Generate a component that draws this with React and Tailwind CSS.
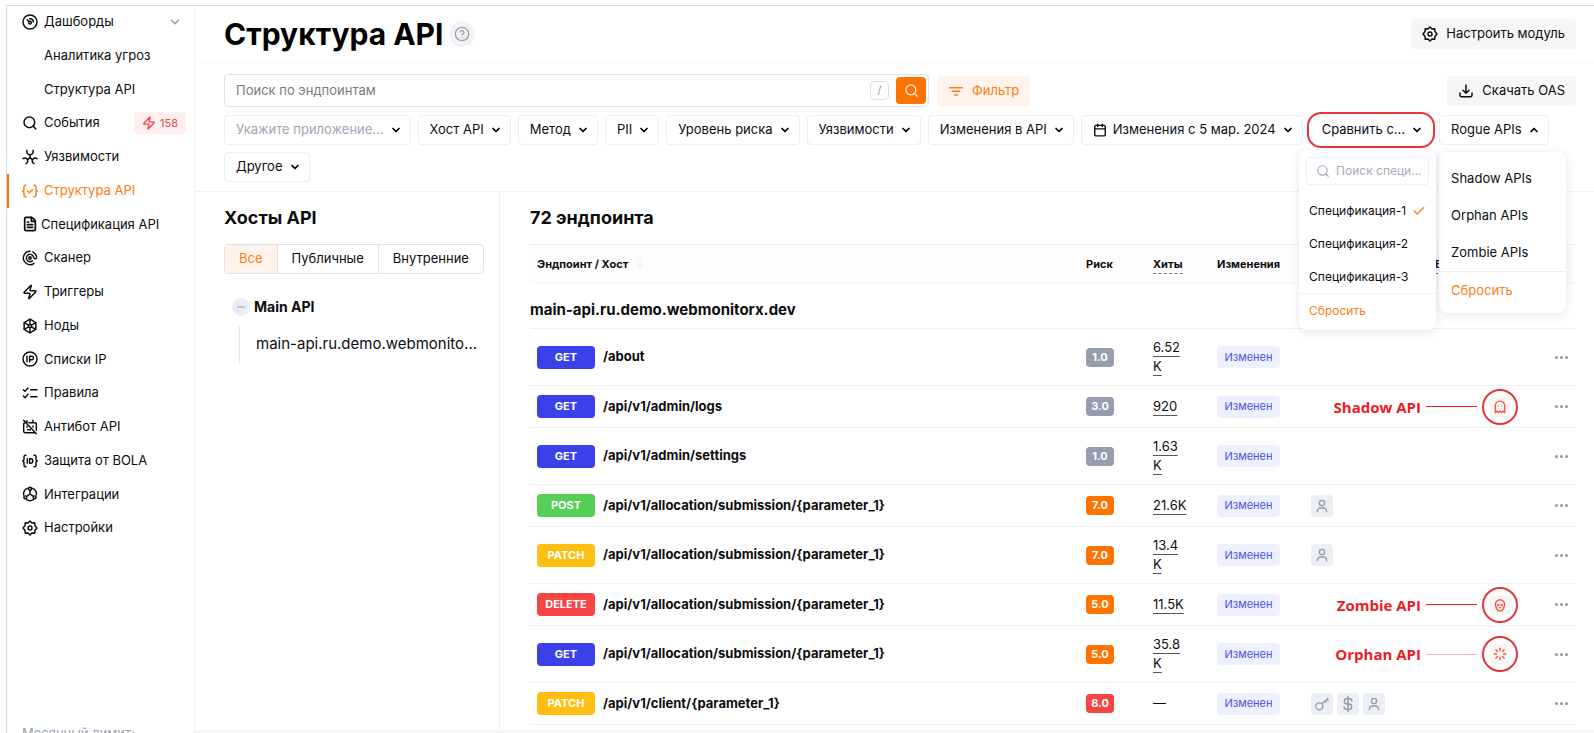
import React from "react";
import {
  Calendar,
  Check,
  ChevronDown,
  ChevronUp,
  CircleHelp,
  FileText,
  Ghost,
  Loader,
  Search,
  Skull,
  Zap,
  ArrowDown,
  Minus,
} from "lucide-react";

function Svg({ size = 16, children, className = "shrink-0" }) {
  return (
    <svg
      width={size}
      height={size}
      viewBox="0 0 24 24"
      fill="none"
      stroke="currentColor"
      strokeWidth="2.2"
      strokeLinecap="round"
      strokeLinejoin="round"
      className={className}
      aria-hidden="true"
    >
      {children}
    </svg>
  );
}

const GaugeIcon = () => (
  <Svg>
    <circle cx="12" cy="12" r="10.5" />
    <circle cx="12" cy="13" r="2" />
    <path d="M10.600 11.500 8 8.500M11.500 7c3.500 0 5.500 2.500 5.500 5" />
  </Svg>
);
const HazardIcon = () => (
  <Svg>
    <path d="M7.500 2c-1.200 3.500.8 6.500 4.500 6.500S17.700 5.500 16.500 2" />
    <path d="M12 8.500v4.500M12 13l-3.500 3M12 13l3.500 3" />
    <path d="M1.500 14.500c3-2 6.300-.5 7 2.500.5 2-.3 4-2.500 5M22.500 14.500c-3-2-6.300-.5-7 2.500-.5 2 .3 4 2.500 5" />
  </Svg>
);
const BracesIcon = () => (
  <Svg>
    <path d="M6 3.5H5.2A2.2 2.2 0 0 0 3 5.7v3.8c0 1.4-.8 2.5-2 2.5 1.200 0 2 1.100 2 2.500v3.800a2.200 2.200 0 0 0 2.200 2.200H6M18 3.500h.8A2.200 2.200 0 0 1 21 5.700v3.800c0 1.400.8 2.500 2 2.500-1.200 0-2 1.100-2 2.500v3.800a2.200 2.200 0 0 1-2.200 2.200H18" />
    <path d="m8.500 12 2.500 2.500 4.500-4.500" />
  </Svg>
);
const RadarIcon = () => (
  <Svg>
    <path d="M12 2a10 10 0 1 0 6 18M16 2.900a10 10 0 0 1 5.800 7.600" />
    <path d="M12 6.500a5.500 5.500 0 1 0 3.500 9.800M14 6.900a5.500 5.500 0 0 1 3.400 4.100c.4 2.300 3.600 2.800 4.400 1" />
    <circle cx="12" cy="12" r="1.800" />
  </Svg>
);
const NodesIcon = () => (
  <Svg>
    <path d="M12 1.800 20.800 6.900v10.200L12 22.200l-8.800-5.100V6.900z" />
    <path d="M12 2v20M3.500 7l17 10M20.500 7l-17 10" />
    <circle cx="12" cy="12" r="2.400" fill="white" />
  </Svg>
);
const IpIcon = () => (
  <Svg>
    <circle cx="12" cy="12" r="10.500" />
    <path d="M7.500 8v8M11.500 16V8h3.200a2.600 2.600 0 0 1 0 5.200h-3.200" />
  </Svg>
);
const RulesIcon = () => (
  <Svg>
    <path d="m2 7 2.500 2.500L9 4.500M2 16.500 4.500 19 9 14M13 7h9.500M13 17.500h9.500" />
  </Svg>
);
const AntibotIcon = () => (
  <Svg>
    <path d="M6 5.500H4.500a2 2 0 0 0-2 2v11a2 2 0 0 0 2 2h14M10.500 5.500h9a2 2 0 0 1 2 2V17M7.500 2.500v3M16.500 2v3.500M2.500 2l19 20" />
    <path d="M7.500 11v1.500M16.500 10.500V12M8.500 16h4" />
  </Svg>
);
const BolaIcon = () => (
  <Svg>
    <path d="M6 3.500H5.200A2.200 2.200 0 0 0 3 5.700v3.800c0 1.400-.8 2.500-2 2.500 1.200 0 2 1.100 2 2.500v3.800a2.200 2.200 0 0 0 2.200 2.200H6M18 3.500h.8A2.200 2.200 0 0 1 21 5.700v3.800c0 1.400.8 2.500 2 2.500-1.200 0-2 1.100-2 2.500v3.800a2.200 2.200 0 0 1-2.200 2.200H18" />
    <path d="M8 8.500v7M11.500 8.500v7h1.700a3 3 0 0 0 3-3v-1a3 3 0 0 0-3-3z" />
  </Svg>
);
const IntegrationsIcon = () => (
  <Svg>
    <path d="M8 3.500a9.500 9.500 0 0 0-5.500 10M16 3.500a9.500 9.500 0 0 1 5.500 10M7 20.500a9.500 9.500 0 0 0 10 0" />
    <circle cx="12" cy="4" r="2.200" />
    <circle cx="5" cy="17" r="2.200" />
    <circle cx="19" cy="17" r="2.200" />
    <path d="M12 6.200V12l-5 3.500M12 12l5 3.500" />
  </Svg>
);
const GearIcon = () => (
  <Svg>
    <path d="m12 1.500 3 3 4.200-.3.100 4.200L22.500 12l-3.200 3.600-.1 4.200-4.200-.3-3 3-3-3-4.200.3-.1-4.200L1.500 12l3.200-3.600.1-4.200 4.200.3z" />
    <circle cx="12" cy="12" r="3" />
  </Svg>
);
const DownloadIcon = () => (
  <Svg>
    <path d="M12 3v12M7.500 11l4.500 4.500 4.500-4.500M3 15v3.500a2 2 0 0 0 2 2h14a2 2 0 0 0 2-2V15" />
  </Svg>
);
const FilterIcon = () => (
  <Svg>
    <path d="M2.500 7h19M6.500 12.500h11M10 18h4" />
  </Svg>
);
const PersonIcon = () => (
  <Svg size={14}>
    <circle cx="12" cy="7" r="4.500" />
    <path d="M4 22c0-4.500 3.500-7 8-7s8 2.500 8 7" />
  </Svg>
);
const KeyIcon = () => (
  <Svg size={14}>
    <circle cx="7.500" cy="16" r="6" />
    <path d="M12 11.500 22 2.500M18.500 5.500v3.500M22 2.500v4" />
  </Svg>
);
const DollarIcon = () => (
  <Svg size={16}>
    <path d="M12 1v22M18 7.500C18 5.500 16 4 13.500 4h-3a4 4 0 0 0 0 8h3a4 4 0 0 1 0 8h-3C8 20 6 18.500 6 16.500" />
  </Svg>
);

const lucide = { size: 16, strokeWidth: 2.2, "aria-hidden": true };

const nav = [
  { label: "Дашборды", icon: <GaugeIcon />, expandable: true },
  { label: "Аналитика угроз" },
  { label: "Структура API" },
  { label: "События", icon: <Search {...lucide} />, badge: "158" },
  { label: "Уязвимости", icon: <HazardIcon /> },
  { label: "Структура API", icon: <BracesIcon />, active: true },
  { label: "Спецификация API", icon: <FileText {...lucide} strokeWidth={2.6} />, tight: true },
  { label: "Сканер", icon: <RadarIcon /> },
  { label: "Триггеры", icon: <Zap {...lucide} /> },
  { label: "Ноды", icon: <NodesIcon /> },
  { label: "Списки IP", icon: <IpIcon /> },
  { label: "Правила", icon: <RulesIcon /> },
  { label: "Антибот API", icon: <AntibotIcon /> },
  { label: "Защита от BOLA", icon: <BolaIcon /> },
  { label: "Интеграции", icon: <IntegrationsIcon /> },
  { label: "Настройки", icon: <GearIcon /> },
];

function Sidebar() {
  return (
    <aside className="flex w-[188px] shrink-0 flex-col justify-between border-r border-[#f3f4f6]">
      <nav className="-mt-px grid h-[540px] auto-rows-fr" aria-label="Основное меню">
        {nav.map((item, i) => (
          <a
            key={i}
            href="#"
            aria-current={item.active ? "page" : undefined}
            className={`flex items-center border-l-2 pr-2 pl-[13px] text-[13px] ${
              item.active ? "border-[#ff7300] text-[#ff7d12]" : "border-transparent"
            }`}
          >
            <span className={`shrink-0 ${item.tight ? "w-[19px]" : "w-[22px]"}`}>{item.icon}</span>
            <span className="whitespace-nowrap">{item.label}</span>
            {item.expandable && (
              <ChevronDown size={14} strokeWidth={2.8} className="mr-1 ml-auto text-[#99a1b3]" />
            )}
            {item.badge && (
              <span className="ml-auto flex h-[22px] items-center gap-1 rounded bg-[#ffeff0] px-2 text-[11px] text-[#f4494c]">
                <Zap size={14} strokeWidth={2.4} />
                {item.badge}
              </span>
            )}
          </a>
        ))}
      </nav>
      <p className="-mb-2 h-4 pl-[15px] text-[13px] leading-4 text-[#99a1b3]">Месячный лимит:</p>
    </aside>
  );
}

function Chip({ children, muted, icon, open, bare }) {
  const Chevron = open ? ChevronUp : ChevronDown;
  return (
    <button
      type="button"
      aria-expanded={!!open}
      className={`flex h-[30px] items-center gap-1.5 rounded border pr-2 pl-[11px] text-[13px] whitespace-nowrap ${
        bare ? "border-transparent" : "border-[#eceef2] bg-white"
      } ${muted ? "text-[#9ea6b5]" : ""}`}
    >
      {icon}
      {children}
      <Chevron size={12} strokeWidth={3.4} className="text-black" />
    </button>
  );
}

function CompareMenu() {
  return (
    <div className="absolute top-full -right-1 z-20 mt-[5px] flex w-[137px] flex-col rounded-lg bg-white pt-[7px] pb-[3px] text-[12px] shadow-[0_2px_10px_rgba(80,100,140,0.16)]">
      <label className="mx-[7px] mb-[9px] flex h-7 items-center gap-1.5 rounded-sm border border-[#eceef2] pl-[9px] text-[#9ea6b5]">
        <Search size={14} strokeWidth={2} className="shrink-0" />
        <span className="sr-only">Поиск спецификации</span>
        <input
          type="text"
          placeholder="Поиск специ..."
          className="w-full min-w-0 bg-transparent outline-none placeholder:text-[#a5acba]"
        />
      </label>
      <button type="button" className="flex h-[33px] items-center gap-1.5 px-[10px]">
        Спецификация-1
        <Check size={14} strokeWidth={2.4} className="shrink-0 text-[#ff7d12]" />
      </button>
      <button type="button" className="flex h-[33px] items-center px-[10px]">Спецификация-2</button>
      <button type="button" className="flex h-[33px] items-center px-[10px]">Спецификация-3</button>
      <button
        type="button"
        className="flex h-[34px] items-center border-t border-[#eef0f3] px-[10px] text-[#ff7d12]"
      >
        Сбросить
      </button>
    </div>
  );
}

function RogueMenu() {
  return (
    <div className="absolute top-full left-0 z-10 mt-[7px] flex w-[127px] flex-col rounded-lg bg-white pt-2 pb-1 text-[13px] shadow-[0_2px_10px_rgba(80,100,140,0.16)]">
      {["Shadow APIs", "Orphan APIs", "Zombie APIs"].map((t) => (
        <button key={t} type="button" className="flex h-[37px] items-center px-3">
          {t}
        </button>
      ))}
      <button
        type="button"
        className="flex h-[38px] items-center border-t border-[#eaedf3] px-3 text-[#ff7d12]"
      >
        Сбросить
      </button>
    </div>
  );
}

function Toolbar() {
  return (
    <section className="border-b border-[#f0f1f3] pt-[11px] pr-[18px] pb-[9px] pl-[29px]">
      <div className="flex items-center gap-2">
        <div className="flex h-[33px] w-[705px] items-center rounded border border-[#dfe2e9] pr-0.5 pl-[11px]">
          <input
            type="text"
            aria-label="Поиск по эндпоинтам"
            placeholder="Поиск по эндпоинтам"
            className="min-w-0 flex-1 bg-transparent text-[13px] outline-none placeholder:text-[#7b7b7b]"
          />
          <kbd className="mr-[7px] flex h-[19px] w-[19px] items-center justify-center rounded border border-[#d9dfe8] font-[Inter] text-[11px] text-[#8f97a6]">
            /
          </kbd>
          <button
            type="button"
            aria-label="Искать"
            className="flex h-[27px] w-[30px] items-center justify-center rounded bg-[#ff7300] text-white"
          >
            <Search size={15} strokeWidth={2} />
          </button>
        </div>
        <button
          type="button"
          className="flex h-[30px] items-center gap-2 rounded bg-[#fff3eb] px-[11px] text-[13px] text-[#ff7d12]"
        >
          <FilterIcon />
          Фильтр
        </button>
        <button
          type="button"
          className="ml-auto flex h-[30px] items-center gap-2 rounded bg-[#f6f6f6] px-[11px] text-[13px]"
        >
          <DownloadIcon />
          Скачать OAS
        </button>
      </div>
      <div className="mt-2 flex flex-wrap gap-[7px]">
        <Chip muted>Укажите приложение...</Chip>
        <Chip>Хост API</Chip>
        <Chip>Метод</Chip>
        <Chip>PII</Chip>
        <Chip>Уровень риска</Chip>
        <Chip>Уязвимости</Chip>
        <Chip>Изменения в API</Chip>
        <Chip icon={<Calendar size={14} strokeWidth={2.4} />}>Изменения с 5 мар. 2024</Chip>
        <div className="relative h-[30px]">
          <div className="-mx-[3px] -my-[3px] rounded-[14px] border-2 border-[#e8363c] p-px">
            <Chip bare>Сравнить с...</Chip>
          </div>
          <CompareMenu />
        </div>
        <div className="relative h-[30px]">
          <Chip open>Rogue APIs</Chip>
          <RogueMenu />
        </div>
        <Chip>Другое</Chip>
      </div>
    </section>
  );
}

function HostsPanel() {
  return (
    <section className="w-[305px] shrink-0 border-r border-[#eeeff2] px-[29px] pt-[14px]">
      <h2 className="text-[18px] leading-6 font-bold">Хосты API</h2>
      <div className="mt-[14px] -mr-4 flex h-[30px] w-max divide-x divide-[#dfe2e9] overflow-hidden rounded border border-[#dfe2e9] text-[13px]">
        <button type="button" className="bg-[#fff3eb] px-[14px] text-[#ff7d12]">Все</button>
        <button type="button" className="px-[14px]">Публичные</button>
        <button type="button" className="px-[14px]">Внутренние</button>
      </div>
      <div className="mt-[23px] ml-2">
        <div className="flex items-center gap-1">
          <button
            type="button"
            aria-label="Свернуть"
            className="flex size-[18px] items-center justify-center rounded-full bg-[#eaeef4] text-[#99a4b5]"
          >
            <Minus size={12} strokeWidth={2.4} />
          </button>
          <span className="text-[14px] leading-5 font-bold">Main API</span>
        </div>
        <div className="mt-[9px] ml-[7px] flex h-[37px] items-center border-l border-[#e3e5ea] pl-4 text-[15px] whitespace-nowrap">
          main-api.ru.demo.webmonito...
        </div>
      </div>
    </section>
  );
}

const methodColors = {
  GET: "bg-[#3a41ea]",
  POST: "bg-[#56cf56]",
  PATCH: "bg-[#ffbf12]",
  DELETE: "bg-[#f54545]",
};
const riskColors = {
  low: "bg-[#959dae]",
  mid: "bg-[#ff7300]",
  high: "bg-[#f54545]",
};

const long = "/api/v1/allocation/submission/{parameter_1}";
const rows = [
  { method: "GET", path: "/about", risk: "1.0", level: "low", hits: "6.52 K" },
  { method: "GET", path: "/api/v1/admin/logs", risk: "3.0", level: "low", hits: "920", note: "Shadow API", Icon: Ghost },
  { method: "GET", path: "/api/v1/admin/settings", risk: "1.0", level: "low", hits: "1.63 K" },
  { method: "POST", path: long, risk: "7.0", level: "mid", hits: "21.6K", tags: [PersonIcon] },
  { method: "PATCH", path: long, risk: "7.0", level: "mid", hits: "13.4 K", tags: [PersonIcon] },
  { method: "DELETE", path: long, risk: "5.0", level: "mid", hits: "11.5K", note: "Zombie API", Icon: Skull },
  { method: "GET", path: long, risk: "5.0", level: "mid", hits: "35.8 K", note: "Orphan API", Icon: Loader, faint: true },
  { method: "PATCH", path: "/api/v1/client/{parameter_1}", risk: "8.0", level: "high", tags: [KeyIcon, DollarIcon, PersonIcon] },
];

function Note({ text, Icon, faint }) {
  return (
    <div className="-my-2 flex items-center justify-end pr-3">
      <span className="font-['Open_Sans','Noto_Sans',sans-serif] text-[15px] leading-5 font-bold whitespace-nowrap text-[#ed1c24]">
        {text}
      </span>
      <span className={`mr-[5px] ml-[5px] h-px w-[51px] ${faint ? "bg-[#f9b4b7]" : "bg-[#ed1c24]"}`} />
      <span className="flex size-9 items-center justify-center rounded-full border-2 border-[#e5363c] text-[#f5564f]">
        <span className="flex size-5 items-center justify-center rounded-sm bg-[#f7f6f2]">
          <Icon size={14} strokeWidth={2.4} />
        </span>
      </span>
    </div>
  );
}

function EndpointRow({ method, path, risk, level, hits, tags = [], note, Icon, faint }) {
  return (
    <tr className="border-b border-[#f0f1f3]">
      <td className="py-[9px] pl-[7px]">
        <div className="flex items-center gap-2">
          <span
            className={`flex h-[23px] w-[58px] items-center justify-center rounded text-[11px] font-bold text-white ${methodColors[method]}`}
          >
            {method}
          </span>
          <span className="text-[13px] font-bold">{path}</span>
        </div>
      </td>
      <td className="pl-[7px]">
        <span
          className={`flex h-[19px] w-7 items-center justify-center rounded text-[11px] font-bold text-white ${riskColors[level]}`}
        >
          {risk}
        </span>
      </td>
      <td className="py-[9px] pr-5 pl-[7px] text-[13px] leading-[19px]">
        {hits ? (
          <a href="#" className="underline decoration-[#555] decoration-1 underline-offset-4">
            {hits}
          </a>
        ) : (
          "—"
        )}
      </td>
      <td className="pl-[7px]">
        <span className="flex h-[22px] w-[63px] items-center justify-center rounded bg-[#eef0ff] text-[11px] text-[#4b50e6]">
          Изменен
        </span>
      </td>
      <td className="pl-[7px]" colSpan={2}>
        {note ? (
          <Note text={note} Icon={Icon} faint={faint} />
        ) : (
          <div className="flex gap-1">
            {tags.map((Tag, i) => (
              <span
                key={i}
                className="flex size-[22px] items-center justify-center rounded bg-[#eceff4] text-[#939bab]"
              >
                <Tag />
              </span>
            ))}
          </div>
        )}
      </td>
      <td>
        <button type="button" aria-label="Действия" className="mr-2 ml-auto flex gap-0.5 py-1 text-[#8f97a8]">
          <i className="size-[3px] rounded-full bg-current" />
          <i className="size-[3px] rounded-full bg-current" />
          <i className="size-[3px] rounded-full bg-current" />
        </button>
      </td>
    </tr>
  );
}

function Endpoints() {
  return (
    <section className="min-w-0 flex-1 pt-[14px] pr-[18px] pb-[5px] pl-[30px]">
      <h2 className="text-[18px] leading-6 font-bold">72 эндпоинта</h2>
      <table className="mt-[14px] w-full table-fixed border-collapse border-t border-[#eeeff2] text-left">
        <colgroup>
          <col />
          <col className="w-[67px]" />
          <col className="w-[64px]" />
          <col className="w-[94px]" />
          <col className="w-[124px]" />
          <col className="w-[102px]" />
          <col className="w-[46px]" />
        </colgroup>
        <thead>
          <tr className="h-[39px] border-b border-[#f4f5f7] bg-[#fdfdfd] text-[11px]">
            <th className="pl-[7px] font-bold">
              <span className="flex items-center gap-1.5">
                Эндпоинт / Хост
                <ArrowDown size={12} strokeWidth={2} className="text-[#e6e8ec]" />
              </span>
            </th>
            <th className="pl-[7px] font-bold">Риск</th>
            <th className="pl-[7px] font-bold">
              <span className="border-b border-dashed border-[#777] pb-0.5">Хиты</span>
            </th>
            <th className="pl-[7px] font-bold">Изменения</th>
            <th />
            <th className="pl-[7px] font-bold">
              <span className="border-b border-dashed border-[#777] pb-0.5">Вид</span>
            </th>
            <th />
          </tr>
        </thead>
        <tbody>
          <tr className="h-[45px] border-b border-[#eeeff2]">
            <th colSpan={7} className="pt-[7px] text-[15px] leading-5 font-bold">
              main-api.ru.demo.webmonitorx.dev
            </th>
          </tr>
          {rows.map((r, i) => (
            <EndpointRow key={i} {...r} />
          ))}
        </tbody>
      </table>
    </section>
  );
}

export default function App() {
  return (
    <div className="h-screen overflow-hidden bg-white pt-[5px] pl-[6px] font-[Inter,'Noto_Sans',sans-serif] text-[#0d0d0f]">
      <div className="flex h-full border-t border-l border-[#d5daea]">
        <Sidebar />
        <main className="flex min-w-0 flex-1 flex-col bg-[#f6f6f6]">
          <div className="bg-white">
            <header className="flex h-[57px] items-center border-b border-[#f5f6f7] pr-[18px] pl-[29px]">
              <h1 className="text-[30px] leading-10 font-bold text-black">Структура API</h1>
              <button
                type="button"
                aria-label="Справка"
                className="ml-1.5 flex size-[26px] items-center justify-center rounded-full bg-[#f2f3f5] text-[#99a1b3]"
              >
                <CircleHelp size={16} strokeWidth={2} />
              </button>
              <button
                type="button"
                className="ml-auto flex h-[30px] items-center gap-2 rounded bg-[#f6f6f6] px-[11px] text-[13px]"
              >
                <GearIcon />
                Настроить модуль
              </button>
            </header>
            <Toolbar />
            <div className="flex">
              <HostsPanel />
              <Endpoints />
            </div>
          </div>
        </main>
      </div>
    </div>
  );
}
